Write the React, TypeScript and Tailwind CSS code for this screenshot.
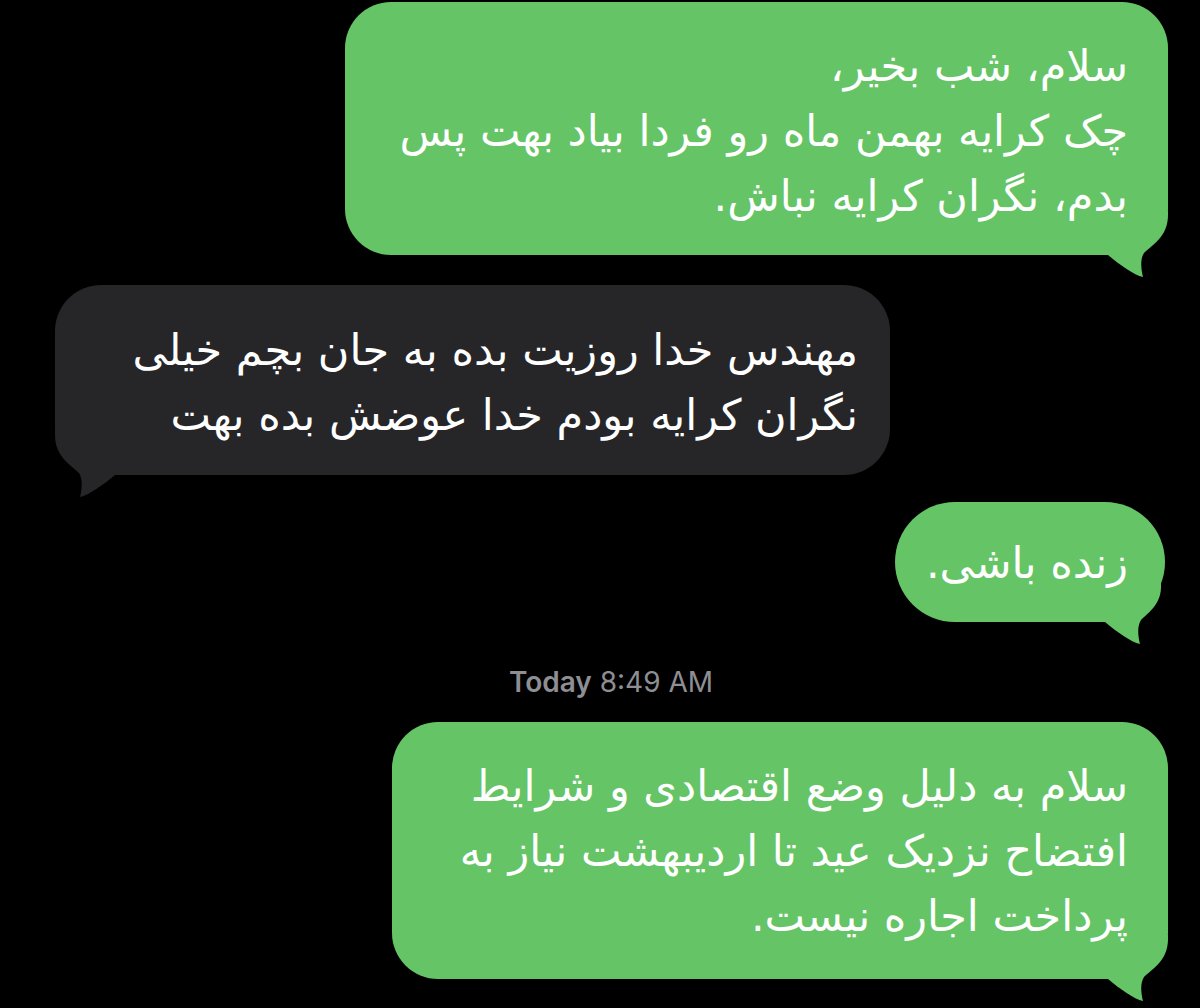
import type { ReactNode } from "react";

const GREEN = "#65c466";
const GRAY = "#262629";

// iMessage style tail, drawn for the bottom-right corner; mirrored for incoming
function Tail({ color, side, pill }: { color: string; side: "right" | "left"; pill?: boolean }) {
  const d = pill
    ? "M0 0 L56 0 L56 6 C57 26 44 34 36 42 C32 48 33 58 35 66 C26 64 12 54 0 44 Z"
    : "M0 0 L60 0 L60 4 C60 26 44 34 36 42 C32 48 33 58 35 66 C26 64 12 54 0 44 Z";
  return (
    <svg
      width="60"
      height="70"
      viewBox="0 0 60 70"
      className={
        side === "right"
          ? "absolute right-0 bottom-[-26px]"
          : "absolute left-0 bottom-[-26px] -scale-x-100"
      }
    >
      <path d={d} fill={color} />
    </svg>
  );
}

function Bubble({
  lines,
  incoming,
  pill,
  className,
}: {
  lines: ReactNode[];
  incoming?: boolean;
  pill?: boolean;
  className: string;
}) {
  const color = incoming ? GRAY : GREEN;
  return (
    <div
      dir="rtl"
      className={`relative text-[43px] leading-[65px] text-white ${className}`}
      style={{ backgroundColor: color, fontFamily: '"DejaVu Sans", "Noto Sans", sans-serif' }}
    >
      {lines.map((l, i) => (
        <div key={i} className="relative z-10 whitespace-nowrap">
          {l}
        </div>
      ))}
      <Tail color={color} side={incoming ? "left" : "right"} pill={pill} />
    </div>
  );
}

export default function App() {
  return (
    <div className="min-h-[1008px] w-[1200px] bg-black overflow-hidden flex flex-col pt-[2px]">
      <div className="flex justify-end pr-[32px]">
        <Bubble
          className="w-[823px] rounded-[46px] pt-[32px] pb-[26px] pr-[40px] pl-[40px]"
          lines={["سلام، شب بخیر،", "چک کرایه بهمن ماه رو فردا بیاد بهت پس", "بدم، نگران کرایه نباش."]}
        />
      </div>

      <div className="flex justify-start pl-[55px] mt-[30px]">
        <Bubble
          incoming
          className="w-[835px] rounded-[46px] pt-[33px] pb-[27px] pr-[32px] pl-[40px]"
          lines={["مهندس خدا روزیت بده به جان بچم خیلی", "نگران کرایه بودم خدا عوضش بده بهت"]}
        />
      </div>

      <div className="flex justify-end pr-[35px] mt-[27px]">
        <Bubble
          pill
          className="w-[270px] rounded-[60px] pt-[29px] pb-[26px] pr-[37px] pl-[20px]"
          lines={["زنده باشی."]}
        />
      </div>

      <div
        className="mt-[44px] h-[32px] pl-[22px] text-center text-[28px] leading-[32px] text-[#8e8e93]"
        style={{ fontFamily: "Inter, 'Liberation Sans', sans-serif" }}
      >
        <span className="font-semibold">Today</span> 8:49 AM
      </div>

      <div className="flex justify-end pr-[32px] mt-[24px]">
        <Bubble
          className="w-[776px] rounded-[46px] pt-[32px] pb-[30px] pr-[40px] pl-[40px]"
          lines={["سلام به دلیل وضع اقتصادی و شرایط", "افتضاح نزدیک عید تا اردیبهشت نیاز به", "پرداخت اجاره نیست."]}
        />
      </div>
    </div>
  );
}
